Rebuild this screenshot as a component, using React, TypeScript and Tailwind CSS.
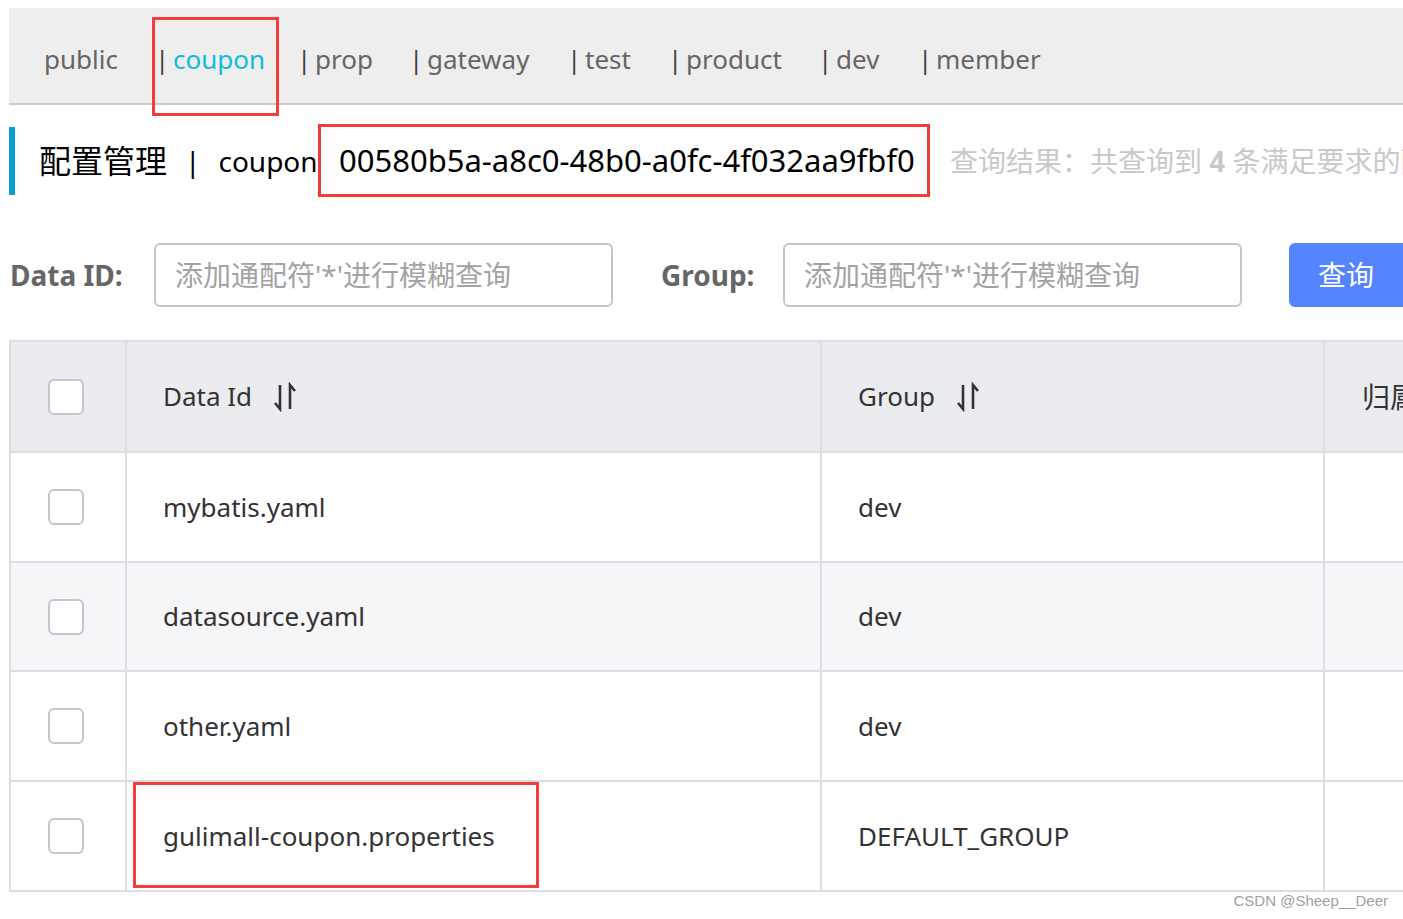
import React from "react"

const latin = { fontFamily: "'Noto Sans', 'Noto Sans CJK SC', sans-serif" }

const tabs = [
  { label: "coupon", w: "w-[142px]", active: true },
  { label: "prop", w: "w-[112px]" },
  { label: "gateway", w: "w-[158px]" },
  { label: "test", w: "w-[101px]" },
  { label: "product", w: "w-[150px]" },
  { label: "dev", w: "w-[100px]" },
  { label: "member", w: "w-[200px]" },
]

const rows = [
  { id: "mybatis.yaml", group: "dev", h: "h-[110px]" },
  { id: "datasource.yaml", group: "dev", h: "h-[109px]", striped: true },
  { id: "other.yaml", group: "dev", h: "h-[110px]" },
  { id: "gulimall-coupon.properties", group: "DEFAULT_GROUP", h: "h-[110px]", marked: true },
]

function SortIcon() {
  return (
    <svg width="26" height="30" viewBox="0 0 26 30" className="ml-[20px] shrink-0" fill="none">
      <path d="M8 3 V27 L3 21" stroke="#333" strokeWidth="2.6" strokeLinejoin="miter" />
      <path d="M18 27 V3 L23 9" stroke="#333" strokeWidth="2.6" strokeLinejoin="miter" />
    </svg>
  )
}

function Checkbox() {
  return <div className="w-[36px] h-[36px] shrink-0 rounded-[6px] border-2 border-[#c4c6cf] bg-white" />
}

export default function App() {
  return (
    <div className="w-[1403px] h-[919px] overflow-hidden bg-white text-[#333]" style={latin}>
      {/* namespace tabs */}
      <div className="relative ml-[9px] mt-[8px] h-[97px] bg-[#eeeeee] border-b-2 border-[#cccccc] flex items-center pt-[8px] pl-[35px] text-[26px] text-[#666] whitespace-nowrap">
        <span className="w-[111px] shrink-0">public</span>
        {tabs.map((t) => (
          <span key={t.label} className={`${t.w} shrink-0 flex`}>
            <span className="w-[18px] text-[#444]">|</span>
            <span className={t.active ? "text-[#0fbcdc]" : ""}>{t.label}</span>
          </span>
        ))}
        <div className="absolute left-[143px] top-[9px] w-[127px] h-[99px] border-[3px] border-[#f43b3b]" />
      </div>

      {/* title */}
      <div className="mt-[19px] h-[73px] flex items-center whitespace-nowrap">
        <div className="ml-[9px] w-[6px] h-[68px] shrink-0 bg-[#0aa0d4]" />
        <div className="ml-[24px] w-[279px] shrink-0 flex items-center text-black">
          <span className="text-[32px]">配置管理</span>
          <span className="text-[28px] ml-[18px] mr-[18px]">|</span>
          <span className="text-[28px]">coupon</span>
        </div>
        <div className="w-[612px] h-[73px] shrink-0 border-[3px] border-[#f43b3b] flex items-center pl-[18px] text-[31px] text-black">
          00580b5a-a8c0-48b0-a0fc-4f032aa9fbf0
        </div>
        <div className="ml-[20px] shrink-0 text-[28px] text-[#c9c9c9]">
          查询结果：共查询到 <span className="font-bold">4</span> 条满足要求的配置。
        </div>
      </div>

      {/* search */}
      <div className="mt-[46px] h-[64px] flex items-center whitespace-nowrap">
        <span className="w-[154px] shrink-0 pl-[10px] text-[28px] font-bold text-[#666]">Data ID:</span>
        <input
          readOnly
          placeholder="添加通配符'*'进行模糊查询"
          className="w-[459px] h-[64px] shrink-0 border-2 border-[#c4c6cf] rounded-[6px] px-[19px] text-[28px] outline-none placeholder:text-[#a3a3a3]"
        />
        <span className="ml-[48px] w-[122px] shrink-0 text-[28px] font-bold text-[#666]">Group:</span>
        <input
          readOnly
          placeholder="添加通配符'*'进行模糊查询"
          className="w-[459px] h-[64px] shrink-0 border-2 border-[#c4c6cf] rounded-[6px] px-[19px] text-[28px] outline-none placeholder:text-[#a3a3a3]"
        />
        <button className="ml-[47px] w-[130px] h-[64px] shrink-0 rounded-[6px] bg-[#5584ff] text-white text-[28px] text-left pl-[29px]">
          查询
        </button>
      </div>

      {/* table */}
      <div className="mt-[33px] ml-[9px] w-[1620px] border-l-2 border-t-2 border-[#dcdee3] text-[26px] whitespace-nowrap">
        <div className="h-[111px] flex bg-[#ebecf0] border-b-2 border-[#dcdee3]">
          <div className="w-[116px] shrink-0 border-r-2 border-[#dcdee3] flex items-center pl-[37px]">
            <Checkbox />
          </div>
          <div className="w-[695px] shrink-0 border-r-2 border-[#dcdee3] flex items-center pl-[36px]">
            Data Id
            <SortIcon />
          </div>
          <div className="w-[503px] shrink-0 border-r-2 border-[#dcdee3] flex items-center pl-[36px]">
            Group
            <SortIcon />
          </div>
          <div className="w-[300px] shrink-0 flex items-center pl-[37px] text-[28px]">归属应用</div>
        </div>
        {rows.map((r) => (
          <div key={r.id} className={`${r.h} flex border-b-2 border-[#dcdee3] ${r.striped ? "bg-[#f5f6f8]" : "bg-white"}`}>
            <div className="w-[116px] shrink-0 border-r-2 border-[#dcdee3] flex items-center pl-[37px]">
              <Checkbox />
            </div>
            <div className="relative w-[695px] shrink-0 border-r-2 border-[#dcdee3] flex items-center pl-[36px]">
              {r.id}
              {r.marked && <div className="absolute left-[6px] top-0 w-[406px] h-[106px] border-[3px] border-[#f43b3b]" />}
            </div>
            <div className="w-[503px] shrink-0 border-r-2 border-[#dcdee3] flex items-center pl-[36px]">{r.group}</div>
            <div className="w-[300px] shrink-0" />
          </div>
        ))}
      </div>

      <div className="flex justify-end pr-[15px] -mt-[2px] text-[15px] text-[#a0a0a0]" style={{ fontFamily: "'Liberation Sans', Arial, sans-serif" }}>
        CSDN @Sheep__Deer
      </div>
    </div>
  )
}
